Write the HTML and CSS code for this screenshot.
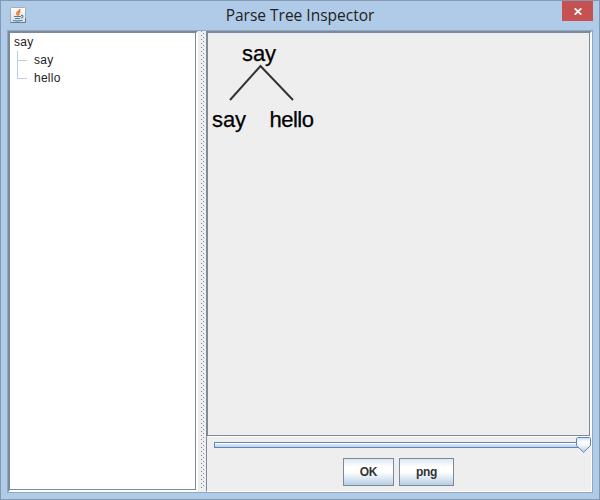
FILE: index.html
```html
<!DOCTYPE html>
<html lang="en">
<head>
<meta charset="utf-8">
<title>Parse Tree Inspector</title>
<link rel="stylesheet" href="styles.css">
</head>
<body>
<div class="window">
  <header class="titlebar">
    <svg class="app-icon" width="16" height="16" viewBox="0 0 16 16">
      <defs><linearGradient id="tile" x2="0" y2="1"><stop stop-color="#fff"/><stop offset="1" stop-color="#d5dfe5"/></linearGradient></defs>
      <rect x=".5" y=".5" width="15" height="15" rx="1" fill="url(#tile)" stroke="#a2adb5"/>
      <path d="M.5 15.5h15V11" fill="none" stroke="#607d92"/>
      <path d="M9.8 2Q10 3.500 7.800 4.800Q5.800 6.300 7.800 8.600M10.500 4.500Q7.800 5.500 8.800 7L8.500 8.500" fill="none" stroke="#e8802c" stroke-width="1.5"/>
      <path d="M4 9.500H11M11 8.500Q14 8 12.500 10.500L11 11M5 11.500H10M3 13.500Q8 14.300 12.500 13.200" fill="none" stroke="#557c98" stroke-width="1.1"/>
    </svg>
    <h1 class="title">Parse Tree Inspector</h1>
    <button class="close" aria-label="Close">
      <svg width="8" height="7" viewBox="0 0 8 7"><path d="M.7 .3L7.300 6.700M7.300 .3L.7 6.700" stroke="#fff" stroke-width="1.7"/></svg>
    </button>
  </header>
  <main class="client">
    <aside class="pane tree-pane">
      <div class="pane-inner tree">
        <div class="row root">say</div>
        <div class="row child">say</div>
        <div class="row child last">hello</div>
      </div>
    </aside>
    <div class="splitter"></div>
    <section class="right">
      <div class="pane canvas-pane">
        <div class="pane-inner">
          <svg class="graph" width="381" height="402" viewBox="208 33 381 402">
            <path d="M230 100L260.500 66L293 100" fill="none" stroke="#333" stroke-width="2"/>
            <text x="242" y="61" textLength="34">say</text>
            <text x="212" y="127" textLength="34">say</text>
            <text x="269.500" y="127" textLength="44.500">hello</text>
          </svg>
        </div>
      </div>
      <div class="controls">
        <div class="slider">
          <div class="track"></div>
          <svg class="thumb" width="15" height="16" viewBox="0 0 15 16">
            <defs><linearGradient id="knob" x2="0" y2="1"><stop stop-color="#c9daed"/><stop offset=".3" stop-color="#fff"/><stop offset=".5" stop-color="#f4f8fc"/><stop offset="1" stop-color="#b8cfe5"/></linearGradient></defs>
            <path d="M1.500 .5H13.500L14.500 1.500V8.500L7.500 15.300L.5 8.500V1.500Z" fill="url(#knob)" stroke="#6382bf"/>
          </svg>
        </div>
        <div class="buttons">
          <button class="btn ok">OK</button>
          <button class="btn png">png</button>
        </div>
      </div>
    </section>
  </main>
</div>
</body>
</html>
```
FILE: styles.css
```css
* { box-sizing: border-box; }
body { margin: 0; }
.window {
  width: 600px;
  height: 500px;
  border: 1px solid #8398b3;
  background: #b0cbe8;
  padding: 0 6px 6px;
  font-family: "Liberation Sans", sans-serif;
}
.titlebar {
  height: 29px;
  display: grid;
  grid-template-columns: 31px 1fr 31px;
  align-items: start;
}
.app-icon { margin: 6px 0 0 3px; display: block; }
.title {
  margin: 4px 0 0;
  font: 400 15.5px/21px "Open Sans", sans-serif;
  text-align: center;
  letter-spacing: 0;
  color: #222;
}
.close {
  width: 31px;
  height: 20px;
  border: 0;
  padding: 1px 0 0;
  background: #c75050;
  display: flex;
  align-items: center;
  justify-content: center;
}
.client {
  height: 463px;
  border: 1px solid #92a8c1;
  display: grid;
  grid-template-columns: 190px 8px 386px;
}
.pane {
  border: 2px solid;
  border-color: #7a8a99 #fff #fff #7a8a99;
}
.pane-inner {
  height: 100%;
  border: solid #7a8a99;
  border-width: 0 1px 1px 0;
}
.tree { background: #fff; color: #222; font-size: 12px; }
.row { height: 18px; line-height: 18px; letter-spacing: 0.25px; }
.root { padding-left: 4px; }
.child {
  margin-left: 7px;
  padding-left: 17px;
  background: linear-gradient(#b8cfe5, #b8cfe5) 0 9px / 10px 1px no-repeat, linear-gradient(#b8cfe5, #b8cfe5) 0 0 / 1px 100% no-repeat;
}
.last { background-size: 10px 1px, 1px 10px; }
.splitter {
  padding: 3px 0;
  background-color: #eee;
  background-image: radial-gradient(circle at 3.5px 1.5px, #7a8a99 0.6px, transparent 0.7px), radial-gradient(circle at 5.5px 3.5px, #7a8a99 0.6px, transparent 0.7px);
  background-size: 8px 4px;
  background-origin: content-box;
  border-bottom: 3px solid #eee;
}
.right { display: grid; grid-template-rows: 406px 55px; }
.canvas-pane { background: #eee; border-bottom-width: 1px; }
.graph { display: block; }
.graph text { font-size: 22px; fill: #000; stroke: #000; stroke-width: 0.25px; }
.controls {
  background: #eee;
  border: 1px solid #fff;
  border-left-color: #7a8a99;
  border-top: 0;
}
.slider { position: relative; height: 17px; padding: 5px 7px 0; }
.track {
  height: 6px;
  border: 1px solid #6382bf;
  background: linear-gradient(#fff 1px, #dce9f4 1px, #b8cfe5);
}
.thumb { position: absolute; right: 0; top: 0; }
.buttons { display: flex; gap: 5px; padding: 4px 0 0 136px; }
.btn {
  height: 28px;
  padding: 0;
  border: 1px solid #7a8a99;
  background: linear-gradient(#dde8f3, #fff 30%, #fff 50%, #b8cfe5);
  color: #333;
  font: bold 12px "Liberation Sans", sans-serif;
  letter-spacing: -0.3px;
}
.ok { width: 51px; }
.png { width: 55px; }
```
